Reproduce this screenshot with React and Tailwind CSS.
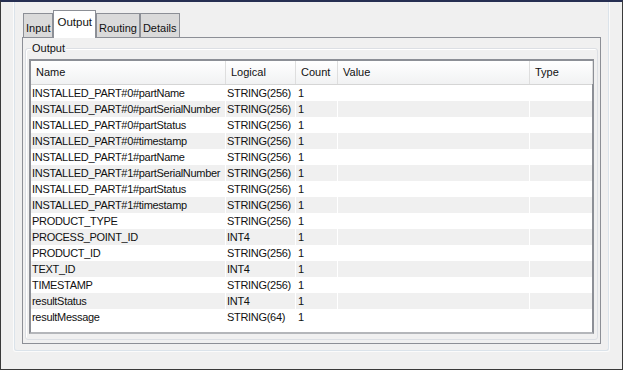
import React from 'react';

const rows = [
  ['INSTALLED_PART#0#partName', 'STRING(256)', '1'],
  ['INSTALLED_PART#0#partSerialNumber', 'STRING(256)', '1'],
  ['INSTALLED_PART#0#partStatus', 'STRING(256)', '1'],
  ['INSTALLED_PART#0#timestamp', 'STRING(256)', '1'],
  ['INSTALLED_PART#1#partName', 'STRING(256)', '1'],
  ['INSTALLED_PART#1#partSerialNumber', 'STRING(256)', '1'],
  ['INSTALLED_PART#1#partStatus', 'STRING(256)', '1'],
  ['INSTALLED_PART#1#timestamp', 'STRING(256)', '1'],
  ['PRODUCT_TYPE', 'STRING(256)', '1'],
  ['PROCESS_POINT_ID', 'INT4', '1'],
  ['PRODUCT_ID', 'STRING(256)', '1'],
  ['TEXT_ID', 'INT4', '1'],
  ['TIMESTAMP', 'STRING(256)', '1'],
  ['resultStatus', 'INT4', '1'],
  ['resultMessage', 'STRING(64)', '1'],
];

const cols = 'grid grid-cols-[195px_70px_42px_192px_63px]';

function Tab({ label, active }) {
  if (active) {
    return (
      <div className="h-[28px] px-[3px] pt-[3px] bg-white border border-b-0 border-[#8c8f96] -mb-px relative z-10 text-[11.5px] leading-[16px]">
        {label}
      </div>
    );
  }
  return (
    <div className="h-[24px] px-[2px] pt-[6px] bg-[#dadada] border border-b-0 border-[#8c8f96] text-[11px] leading-[16px]">
      {label}
    </div>
  );
}

export default function App() {
  return (
    <div className="w-[623px] h-[370px] bg-[#f0f0f0] border-t-2 border-t-[#262f52] border-x border-b border-x-[#3a3a3a] border-b-[#3a3a3a] text-[#111] overflow-hidden" style={{ fontFamily: '"Liberation Sans", Arial, sans-serif' }}>
      <div className="mx-[12px] h-[350px] border-x border-b border-[#fbfbfb] rounded-b-[3px]">
        <div className="h-[349px] border-x border-b border-[#dbe3ea] rounded-b-[3px] pl-[7px] pr-[7px] pt-[8px]">
          <div className="flex items-end pl-[1px] text-[#111]">
            <Tab label="Input" />
            <Tab label="Output" active />
            <Tab label="Routing" />
            <Tab label="Details" />
          </div>
          <div className="h-[307px] bg-[#f0f0f0] border border-[#8c8f96] px-[2px] pt-[10px]">
            <div className="relative h-[292px] border border-[#dcdfe4] rounded-[3px] px-[3px] pt-[10px] shadow-[inset_1px_1px_0_#fff]">
              <div className="absolute left-[5px] -top-[8px] px-[1px] bg-[#f0f0f0] text-[11px] leading-[14px]">Output</div>
              <div className="h-[275px] border-2 border-[#8c8f96] border-b-[#b4b6ba] bg-white">
                <div className={`${cols} h-[24px] bg-gradient-to-b from-white to-[#f1f2f3] border-b border-[#d5d5d5] text-[11px] leading-[23px]`}>
                  {['Name', 'Logical', 'Count', 'Value', 'Type'].map((h) => (
                    <div key={h} className="pl-[5px] border-r border-[#dedede]">{h}</div>
                  ))}
                </div>
                {rows.map((r, i) => (
                  <div key={r[0]} className={`${cols} h-[16px] text-[11px] leading-[17px] tracking-[-0.3px] ${i % 2 ? 'bg-[#f0f0f0]' : 'bg-white'}`}>
                    <div className="pl-[1px] border-r border-white whitespace-nowrap overflow-hidden">{r[0]}</div>
                    <div className="pl-[1px] border-r border-white">{r[1]}</div>
                    <div className="pl-[2px] border-r border-white">{r[2]}</div>
                    <div className="border-r border-white"></div>
                    <div></div>
                  </div>
                ))}
              </div>
            </div>
          </div>
        </div>
      </div>
    </div>
  );
}
